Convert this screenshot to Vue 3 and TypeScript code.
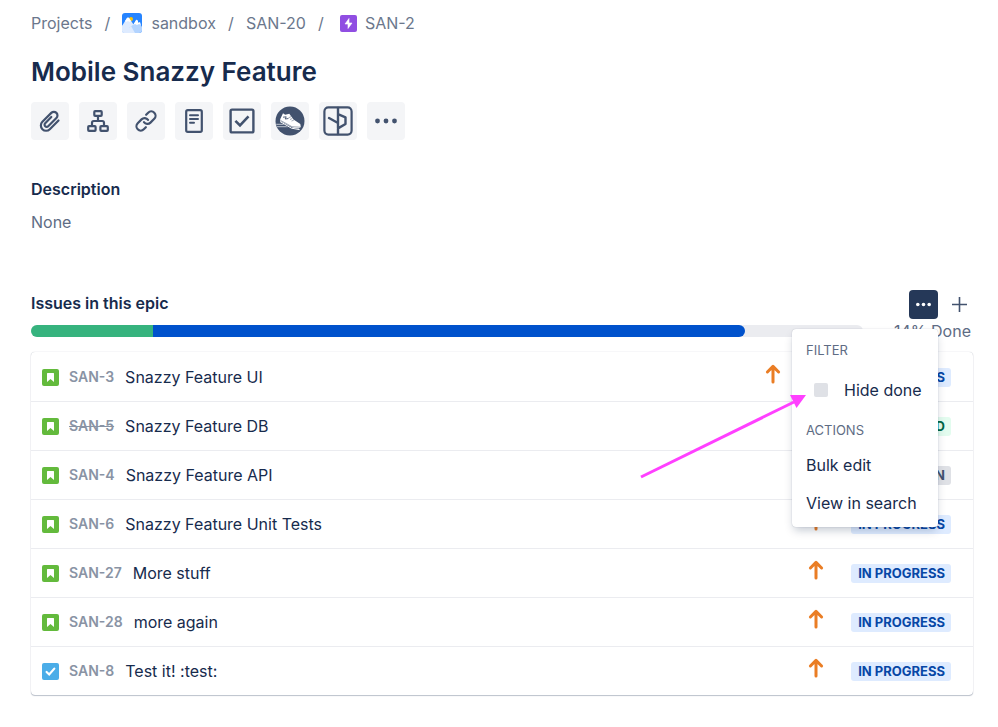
<script setup lang="ts">
import { ref } from 'vue'

type Status = 'progress' | 'closed' | 'open'

interface Issue {
  key: string
  title: string
  type: 'story' | 'task'
  status: Status
  resolved?: boolean
  assigned?: boolean
}

const issues: Issue[] = [
  { key: 'SAN-3', title: 'Snazzy Feature UI', type: 'story', status: 'progress', assigned: true },
  { key: 'SAN-5', title: 'Snazzy Feature DB', type: 'story', status: 'closed', resolved: true },
  { key: 'SAN-4', title: 'Snazzy Feature API', type: 'story', status: 'open' },
  { key: 'SAN-6', title: 'Snazzy Feature Unit Tests', type: 'story', status: 'progress' },
  { key: 'SAN-27', title: 'More stuff', type: 'story', status: 'progress' },
  { key: 'SAN-28', title: 'more again', type: 'story', status: 'progress' },
  { key: 'SAN-8', title: 'Test it! :test:', type: 'task', status: 'progress' },
]

const statusLabels: Record<Status, string> = {
  progress: 'IN PROGRESS',
  closed: 'CLOSED',
  open: 'OPEN',
}

const progress = { done: 14.7, started: 71.1 }
const menuOpen = ref(true)
const hideDone = ref(false)
</script>

<template>
  <main class="page">
    <nav class="crumbs" aria-label="Breadcrumbs">
      <a href="#">Projects</a>
      <span class="slash">/</span>
      <a href="#" class="project">
        <svg width="20" height="20" viewBox="0 0 20 20" aria-hidden="true">
          <defs>
            <clipPath id="tile"><rect width="20" height="20" rx="3" /></clipPath>
          </defs>
          <g clip-path="url(#tile)">
            <rect width="20" height="20" fill="#2684ff" />
            <circle cx="9" cy="6" r="2" fill="#ffc400" />
            <path d="M0 13 5 5Q6 4 7 5L14 15V20H0Z" fill="#deebff" />
            <path d="M3 8 5 5Q6 4 7 5L9 8 8 9 6 8 4 9Z" fill="#fff" />
            <path d="M7 20V15L12 11 14 8 16 10 17 9 20 14V20Z" fill="#b3d4ff" />
            <path d="M11 12 14 7Q15 6 16 8L16 10 18 9 19 12 17 11 15 12 13 11Z" fill="#fff" />
            <path d="M0 13 3 11 6 16 9 13 13 20H0Z" fill="#deebff" />
          </g>
        </svg>
        <span>sandbox</span>
      </a>
      <span class="slash">/</span>
      <a href="#">SAN-20</a>
      <span class="slash">/</span>
      <a href="#" class="epic">
        <svg width="17" height="17" viewBox="0 0 17 17" aria-hidden="true">
          <rect width="17" height="17" rx="2" fill="#904ee2" />
          <path d="M9 3.5 5 9H8V13.5L12 8H9Z" fill="#fff" stroke="#fff" stroke-width=".6" stroke-linejoin="round" />
        </svg>
        <span>SAN-2</span>
      </a>
    </nav>

    <h1>Mobile Snazzy Feature</h1>

    <div class="toolbar">
      <button type="button" aria-label="Attach">
        <svg width="30" height="30" viewBox="0 0 30 30" class="line">
          <path d="M15.8 10.4 9.7 16.6a2.1 2.1 0 0 0 3 3l8.2-8.2a3.6 3.6 0 0 0-5.1-5.1L6.9 15.2a5.2 5.2 0 0 0 7.4 7.4l8.7-8.7" transform="translate(.5 .6)" />
        </svg>
      </button>
      <button type="button" aria-label="Create subtask">
        <svg width="30" height="30" viewBox="0 0 30 30" class="line">
          <rect x="11.3" y="5.2" width="7.4" height="4.6" rx=".8" />
          <rect x="5.2" y="20.2" width="7.4" height="4.6" rx=".8" />
          <rect x="17.4" y="20.2" width="7.4" height="4.6" rx=".8" />
          <path d="M15 10V15M9 20V16.8Q9 15 10.8 15H19.2Q21 15 21 16.8V20" />
        </svg>
      </button>
      <button type="button" aria-label="Link issue">
        <svg width="30" height="30" viewBox="0 0 30 30" class="line">
          <g transform="rotate(-45 15 15)">
            <path d="M10.5 19.3H7.6a4.3 4.3 0 0 1 0-8.6h5.4a4.3 4.3 0 0 1 4.2 5" />
            <path d="M19.5 10.7h2.9a4.3 4.3 0 0 1 0 8.6h-5.4a4.3 4.3 0 0 1-4.2-5" />
          </g>
        </svg>
      </button>
      <button type="button" aria-label="Add page">
        <svg width="30" height="30" viewBox="0 0 30 30" class="line">
          <rect x="7.2" y="4.2" width="15.6" height="21.6" rx="1.6" />
          <path d="M11 9.2H19M11 13H19M11 16.8H15" stroke-width="2" />
        </svg>
      </button>
      <button type="button" aria-label="Add checklist">
        <svg width="30" height="30" viewBox="0 0 30 30" class="line">
          <rect x="3.6" y="3.6" width="22.8" height="22.8" rx="1.4" stroke-width="2.4" />
          <path d="M8.4 14.8 13 19.4 21.5 10.4" stroke-width="2.6" stroke-linecap="butt" stroke-linejoin="miter" />
        </svg>
      </button>
      <button type="button" aria-label="Sneaker">
        <svg width="30" height="30" viewBox="0 0 30 30">
          <circle cx="15" cy="15" r="14.5" fill="#42526e" />
          <path d="M5.2 13.2 8 7.3 10.2 8.7 14.3 7.8 18.5 13.6 25.3 18.1 25.8 21 23.5 22.6 18 21.8 5.2 15Z" fill="#fff" />
          <path d="M5 15.5 16.5 22.2 24.6 23.6" fill="none" stroke="#fff" stroke-width="1" />
          <path d="M5.5 14.4 17 20.7 25.4 21.2M13.5 11.8 16 10.7M15 13.5 17.3 12.5M16.5 15 18.8 14.2" fill="none" stroke="#8993a4" stroke-width=".8" />
          <path d="M8 11.2 11.2 10.8 10.2 13 13.4 12.5" fill="none" stroke="#42526e" stroke-width=".9" />
          <path d="M1 17.8H7.5L10 19H1.3ZM1.6 20H11L13 21.2H2Z" fill="#a5adba" />
        </svg>
      </button>
      <button type="button" aria-label="Open app panel">
        <svg width="30" height="30" viewBox="0 0 30 30" class="line">
          <rect x="1.4" y="1.4" width="27.2" height="27.2" rx="4" />
          <path d="M15 2V28M6 12 15 17M15 8.2 22.5 11.3V18L15 22.4" stroke-width="2.4" />
        </svg>
      </button>
      <button type="button" aria-label="More">
        <svg width="30" height="30" viewBox="0 0 30 30" fill="#42526e">
          <circle cx="6.5" cy="15" r="2.4" /><circle cx="15" cy="15" r="2.4" /><circle cx="23.5" cy="15" r="2.4" />
        </svg>
      </button>
    </div>

    <h2 class="description">Description</h2>
    <p class="none">None</p>

    <section>
      <header class="epic-header">
        <h2>Issues in this epic</h2>
        <div class="actions">
          <div class="menu-anchor">
            <button type="button" class="more" aria-label="Issue actions" :aria-expanded="menuOpen" @click="menuOpen = !menuOpen">
              <svg width="17" height="5" viewBox="0 0 17 5" fill="#fff">
                <circle cx="2.8" cy="2.5" r="1.8" /><circle cx="8.5" cy="2.5" r="1.8" /><circle cx="14.2" cy="2.5" r="1.8" />
              </svg>
            </button>
            <div v-if="menuOpen" class="menu">
              <h3>FILTER</h3>
              <label class="check"><input v-model="hideDone" type="checkbox"><span>Hide done</span></label>
              <h3>ACTIONS</h3>
              <button type="button">Bulk edit</button>
              <button type="button">View in search</button>
              <svg class="pointer" width="170" height="90" viewBox="0 0 170 90" aria-hidden="true">
                <path d="M3 84 156 9" stroke="#ff40ff" stroke-width="3" fill="none" />
                <path d="M168 2 152 2 158.5 15Z" fill="#ff40ff" />
              </svg>
            </div>
          </div>
          <button type="button" class="add" aria-label="Add issue">
            <svg width="15" height="15" viewBox="0 0 15 15" stroke="#42526e" stroke-width="1.6"><path d="M7.5 0V15M0 7.5H15" /></svg>
          </button>
        </div>
      </header>

      <div class="progress">
        <div class="track">
          <div class="done" :style="{ width: progress.done + '%' }"></div>
          <div class="started" :style="{ width: progress.started + '%' }"></div>
        </div>
        <span class="percent">14% Done</span>
      </div>

      <ul class="issues">
        <li v-for="issue in issues" :key="issue.key">
          <svg v-if="issue.type === 'story'" width="17" height="17" viewBox="0 0 17 17" aria-hidden="true">
            <rect width="17" height="17" rx="2" fill="#63ba3c" />
            <path d="M5 4.4Q5 4 5.4 4H11.6Q12 4 12 4.4V13L8.5 9.9 5 13Z" fill="#fff" />
          </svg>
          <svg v-else width="17" height="17" viewBox="0 0 17 17" aria-hidden="true">
            <rect width="17" height="17" rx="2" fill="#4bade8" />
            <path d="M4.6 9 7.2 11.5 12.3 5.6" fill="none" stroke="#fff" stroke-width="2.2" stroke-linecap="round" />
          </svg>
          <a href="#" class="key" :class="{ resolved: issue.resolved }">{{ issue.key }}</a>
          <a href="#" class="title">{{ issue.title }}</a>
          <svg class="priority" width="16" height="20" viewBox="0 0 16 20" aria-hidden="true">
            <path d="M8 18V3M2.4 8 8 2.4 13.6 8" fill="none" stroke="#ea7d24" stroke-width="3" stroke-linecap="round" stroke-linejoin="round" />
          </svg>
          <span v-if="issue.assigned" class="avatar"></span>
          <span class="status"><span class="badge" :class="issue.status">{{ statusLabels[issue.status] }}</span></span>
        </li>
      </ul>
    </section>
  </main>
</template>

<style>
body {
  margin: 0;
  background: #fff;
}
</style>

<style scoped>
.page {
  box-sizing: border-box;
  padding: 11px 25px 24px 31px;
  font-family: Inter, "Liberation Sans", sans-serif;
  font-size: 16px;
  line-height: 24px;
  color: #172b4d;
}
h1, h2, h3, p, ul {
  margin: 0;
  padding: 0;
}
a {
  color: inherit;
  text-decoration: none;
}
button {
  padding: 0;
  border: 0;
  font: inherit;
  color: inherit;
  background: none;
  cursor: pointer;
}
svg {
  display: block;
  flex: none;
}
.crumbs {
  display: flex;
  align-items: center;
  color: #6b778c;
}
.slash {
  width: 30px;
  text-align: center;
}
.project, .epic {
  display: flex;
  align-items: center;
  gap: 9px;
}
.epic {
  gap: 8px;
  margin-left: 4px;
}
h1 {
  margin-top: 19px;
  font-size: 26px;
  line-height: 36px;
  font-weight: 600;
}
h2 {
  font-size: 16px;
  font-weight: 600;
}
.toolbar {
  display: flex;
  gap: 10px;
  margin-top: 12px;
}
.toolbar button {
  display: grid;
  place-items: center;
  width: 38px;
  height: 38px;
  border-radius: 4px;
  background: #f4f5f7;
}
.line {
  fill: none;
  stroke: #42526e;
  stroke-width: 2.2;
  stroke-linecap: round;
  stroke-linejoin: round;
}
.description {
  margin-top: 37px;
}
.none {
  margin-top: 9px;
  color: #5e6c84;
}
.epic-header {
  display: flex;
  align-items: flex-start;
  justify-content: space-between;
  margin-top: 56px;
}
.epic-header h2 {
  padding-top: 1px;
}
.actions {
  display: flex;
  align-items: center;
  gap: 14px;
  padding-right: 6px;
}
.menu-anchor {
  position: relative;
}
.more {
  display: grid;
  place-items: center;
  width: 29px;
  height: 29px;
  border-radius: 4px;
  background: #253858;
}
.menu {
  position: absolute;
  z-index: 1;
  top: 39px;
  right: 0;
  box-sizing: border-box;
  width: 146px;
  padding: 11px 0 5px;
  border-radius: 4px;
  background: #fff;
  box-shadow: 0 5px 10px -2px rgba(9, 30, 66, 0.25), 0 0 1px rgba(9, 30, 66, 0.31);
}
.menu h3 {
  padding: 0 14px;
  font-size: 13px;
  line-height: 20px;
  font-weight: 400;
  color: #5e6c84;
}
.menu button {
  display: block;
  width: 100%;
  height: 38px;
  padding: 0 14px;
  text-align: left;
  white-space: nowrap;
}
.menu h3 + button {
  margin-top: 6px;
}
.check {
  display: flex;
  align-items: center;
  gap: 16px;
  height: 38px;
  margin: 11px 0;
  padding-left: 22px;
  white-space: nowrap;
  cursor: pointer;
}
.check input {
  appearance: none;
  flex: none;
  width: 14px;
  height: 14px;
  margin: 0;
  border-radius: 2px;
  background: #dfe1e6;
}
.check input:checked {
  background: #0052cc;
}
.pointer {
  position: absolute;
  top: 64px;
  left: -154px;
  pointer-events: none;
}
.progress {
  display: flex;
  align-items: center;
}
.track {
  display: flex;
  flex: 1;
  height: 12px;
  border-radius: 6px;
  overflow: hidden;
  background: #ebecf0;
}
.done {
  background: #36b37e;
}
.started {
  border-radius: 0 6px 6px 0;
  background: #0052cc;
}
.percent {
  width: 108px;
  padding-right: 2px;
  text-align: right;
  color: #5e6c84;
}
.issues {
  margin-top: 9px;
  list-style: none;
  border-radius: 4px;
  box-shadow: 0 1px 1px rgba(9, 30, 66, 0.25), 0 0 1px rgba(9, 30, 66, 0.31);
}
li {
  display: flex;
  align-items: center;
  height: 48px;
  padding: 1px 22px 0 11px;
}
li + li {
  padding-top: 0;
  border-top: 1px solid #ebecf0;
}
.key {
  margin-left: 10px;
  font-size: 14px;
  font-weight: 600;
  color: #8993a4;
}
.resolved {
  text-decoration: line-through;
}
.title {
  flex: 1;
  margin-left: 11px;
}
.priority {
  margin-bottom: 7px;
}
.avatar {
  width: 28px;
  height: 28px;
  margin-left: 15px;
  border-radius: 50%;
  background: #dfe1e6;
}
.status {
  display: flex;
  justify-content: flex-end;
  min-width: 102px;
  margin-left: 25px;
}
.badge {
  padding: 0 6px 0 7px;
  border-radius: 3px;
  font-size: 13px;
  line-height: 19px;
  font-weight: 700;
}
.badge.progress {
  color: #0747a6;
  background: #deebff;
}
.badge.closed {
  color: #006644;
  background: #e3fcef;
}
.badge.open {
  color: #42526e;
  background: #dfe1e6;
}
</style>
